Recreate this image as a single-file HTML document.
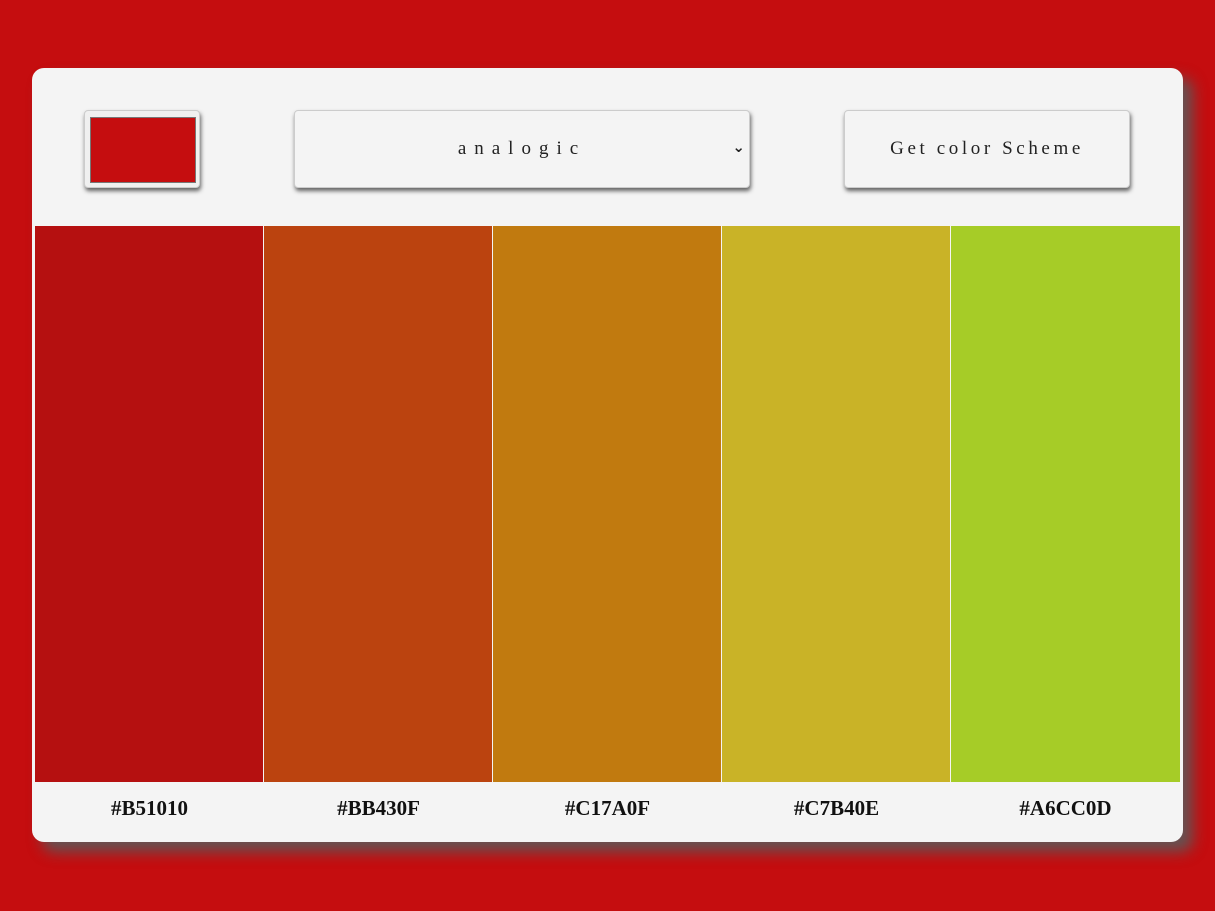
<!DOCTYPE html>
<html><head><style>
body{margin:0;width:1215px;height:911px;background:#c50d0f;font-family:"Liberation Serif",serif;overflow:hidden}
.card{position:absolute;left:32px;top:68px;width:1151px;height:774px;background:#f4f4f4;border-radius:12px;box-shadow:10px 10px 14px rgba(90,90,90,.9)}
.sw{position:absolute;left:84px;top:110px;width:116px;height:78px;box-sizing:border-box;border:1px solid #ccc;border-radius:4px;background:#f0f0f0;box-shadow:1px 3px 4px rgba(0,0,0,.6)}
.sw div{position:absolute;left:5px;top:6px;width:104px;height:64px;background:#c50d0f;border:1px solid #777}
.sel{position:absolute;left:294px;top:110px;width:456px;height:78px;box-sizing:border-box;border:1px solid #ccc;border-radius:4px;background:#f4f4f4;box-shadow:1px 3px 4px rgba(0,0,0,.6);text-align:center;line-height:76px;font-size:19px;letter-spacing:8px;color:#222}
.sel span{position:absolute;right:4px;top:-2px;font-size:15px;letter-spacing:0;font-family:"DejaVu Sans";font-weight:bold}
.btn{position:absolute;left:844px;top:110px;width:286px;height:78px;box-sizing:border-box;border:1px solid #ccc;border-radius:4px;background:#f4f4f4;box-shadow:1px 3px 4px rgba(0,0,0,.6);text-align:center;line-height:76px;font-size:19px;letter-spacing:3.6px;color:#222}
.col{position:absolute;top:226px;height:556px;width:228px}
.lab{position:absolute;top:796px;width:229px;text-align:center;font-weight:bold;font-size:21px;color:#111}
</style></head><body>
<div class="card"></div>
<div class="sw"><div></div></div>
<div class="sel">analogic<span>⌄</span></div>
<div class="btn">Get color Scheme</div>
<div class="col" style="left:35px;background:#b51010"></div>
<div class="col" style="left:264px;background:#bb430f"></div>
<div class="col" style="left:493px;background:#c17a0f"></div>
<div class="col" style="left:722px;background:#c9b327"></div>
<div class="col" style="left:951px;width:229px;background:#a6cc27"></div>
<div class="lab" style="left:35px">#B51010</div>
<div class="lab" style="left:264px">#BB430F</div>
<div class="lab" style="left:493px">#C17A0F</div>
<div class="lab" style="left:722px">#C7B40E</div>
<div class="lab" style="left:951px">#A6CC0D</div>
</body></html>
